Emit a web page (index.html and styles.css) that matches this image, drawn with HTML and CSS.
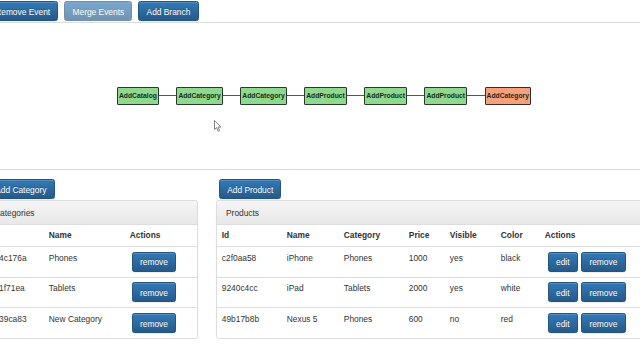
FILE: index.html
```html
<!DOCTYPE html>
<html>
<head>
<meta charset="utf-8">
<link rel="stylesheet" href="styles.css">
</head>
<body>
<div class="page">
  <div class="toolbar">
    <button class="btn">Remove Event</button>
    <button class="btn disabled">Merge Events</button>
    <button class="btn">Add Branch</button>
  </div>
  <div class="graph">
    <div class="chain">
      <div class="node">AddCatalog</div><div class="edge"></div>
      <div class="node">AddCategory</div><div class="edge"></div>
      <div class="node">AddCategory</div><div class="edge"></div>
      <div class="node">AddProduct</div><div class="edge"></div>
      <div class="node">AddProduct</div><div class="edge"></div>
      <div class="node">AddProduct</div><div class="edge"></div>
      <div class="node current">AddCategory</div>
    </div>
    <svg class="cursor" width="8" height="12" viewBox="0 0 8 12"><path d="M0.5 0.5 L0.5 9.5 L2.6 7.6 L4.2 11.2 L5.6 10.6 L4.1 7.1 L7 7.1 Z" fill="#fff" stroke="#666" stroke-width="0.8"/></svg>
  </div>
  <div class="row">
    <div class="col col-left">
      <button class="btn">Add Category</button>
      <div class="panel">
        <div class="panel-heading">Categories</div>
        <table>
          <thead><tr><th class="c-id">Id</th><th class="c-name">Name</th><th class="c-act">Actions</th></tr></thead>
          <tbody>
            <tr><td>b54c176a</td><td>Phones</td><td><button class="btn sm">remove</button></td></tr>
            <tr><td>a31f71ea</td><td>Tablets</td><td><button class="btn sm">remove</button></td></tr>
            <tr><td>e639ca83</td><td>New Category</td><td><button class="btn sm">remove</button></td></tr>
          </tbody>
        </table>
      </div>
    </div>
    <div class="col col-right">
      <button class="btn">Add Product</button>
      <div class="panel">
        <div class="panel-heading">Products</div>
        <table>
          <thead><tr><th class="p-id">Id</th><th class="p-name">Name</th><th class="p-cat">Category</th><th class="p-price">Price</th><th class="p-vis">Visible</th><th class="p-col">Color</th><th>Actions</th></tr></thead>
          <tbody>
            <tr><td>c2f0aa58</td><td>iPhone</td><td>Phones</td><td>1000</td><td>yes</td><td>black</td><td><div class="acts"><button class="btn sm">edit</button><button class="btn sm">remove</button></div></td></tr>
            <tr><td>9240c4cc</td><td>iPad</td><td>Tablets</td><td>2000</td><td>yes</td><td>white</td><td><div class="acts"><button class="btn sm">edit</button><button class="btn sm">remove</button></div></td></tr>
            <tr><td>49b17b8b</td><td>Nexus 5</td><td>Phones</td><td>600</td><td>no</td><td>red</td><td><div class="acts"><button class="btn sm">edit</button><button class="btn sm">remove</button></div></td></tr>
          </tbody>
        </table>
      </div>
    </div>
  </div>
</div>
</body>
</html>
```
FILE: styles.css
```css
html, body {
  margin: 0;
  padding: 0;
  background: #fff;
  overflow: hidden;
}
body {
  font-family: "Liberation Sans", Arial, sans-serif;
  font-size: 8.4px;
  line-height: 12px;
  color: #333;
}
.page {
  margin-left: -16px;
  width: 700px;
}
.btn {
  font-family: inherit;
  font-size: 8.4px;
  line-height: 12px;
  height: 20px;
  padding: 3.6px 7.2px;
  color: #fff;
  background-image: linear-gradient(to bottom, #337ab7 0, #265a88 100%);
  border: 0.6px solid #245580;
  border-radius: 2.4px;
  box-shadow: inset 0 1px 0 rgba(255,255,255,.15), 0 1px 1px rgba(0,0,0,.075);
  text-shadow: 0 -1px 0 rgba(0,0,0,.2);
  white-space: nowrap;
  cursor: pointer;
  display: block;
}
.btn.disabled {
  opacity: .65;
  box-shadow: none;
}
.toolbar {
  display: flex;
  gap: 6px;
  padding: 1px 0 0 3px;
  height: 21px;
  box-sizing: border-box;
}
.graph {
  position: relative;
  margin-top: 0.5px;
  height: 148px;
  border-top: 1.2px solid #dcdcdc;
  border-bottom: 1.2px solid #dcdcdc;
  box-sizing: border-box;
}
.chain {
  display: flex;
  align-items: center;
  padding: 64px 0 0 133px;
}
.node {
  height: 18px;
  box-sizing: border-box;
  border: 1.4px solid #2c3a2c;
  border-radius: 1px;
  background: #8ed98e;
  color: #1c2a1c;
  font-weight: bold;
  font-size: 6.75px;
  padding: 0 1px;
  display: flex;
  align-items: center;
}
.node.current {
  background: #f7a07c;
  border-color: #3a2c28;
}
.edge {
  width: 17.5px;
  height: 1px;
  background: #555;
}
.cursor {
  position: absolute;
  left: 230px;
  top: 97px;
}
.row {
  display: flex;
  gap: 18px;
  margin-top: 9.5px;
}
.col > .btn {
  margin-left: 3px;
}
.col-left { width: 214px; }
.col-right { width: 446px; }
.panel {
  margin-top: 0.5px;
  border: 1px solid #ddd;
  border-radius: 2.4px;
  box-shadow: 0 1px 2px rgba(0,0,0,.05);
  background: #fff;
  overflow: hidden;
}
.panel-heading {
  height: 24px;
  box-sizing: border-box;
  padding: 6px 9px;
  background-image: linear-gradient(to bottom, #f5f5f5 0, #e8e8e8 100%);
  border-bottom: 1px solid #ddd;
  color: #333;
}
table {
  width: 100%;
  border-collapse: collapse;
  table-layout: fixed;
}
th, td {
  box-sizing: border-box;
  text-align: left;
  vertical-align: top;
  padding: 4.8px;
  white-space: nowrap;
  overflow: hidden;
}
th {
  font-weight: bold;
  border-bottom: 1.2px solid #ddd;
}
td {
  border-top: 0.6px solid #ddd;
}
tbody tr:first-child td { border-top: 0; }
td .btn.sm { margin-left: 2px; }
.c-id { width: 59px; }
.c-name { width: 81px; }
.p-id { width: 65px; }
.p-name { width: 57px; }
.p-cat { width: 65px; }
.p-price { width: 41px; }
.p-vis { width: 51px; }
.p-col { width: 44px; }
.acts {
  display: flex;
  gap: 3.5px;
  margin-left: 3px;
}
.acts .btn.sm { margin-left: 0; }
```
